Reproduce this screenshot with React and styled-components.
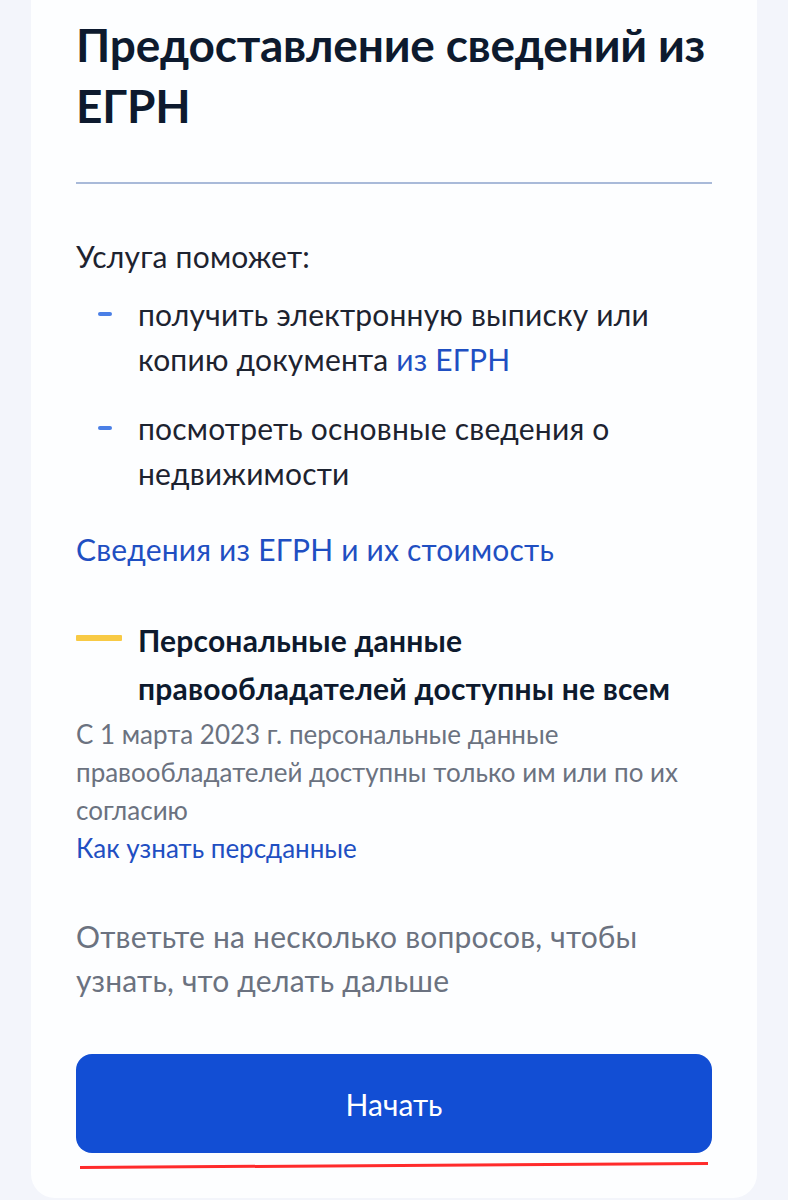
import React from 'react'
import styled, { createGlobalStyle } from 'styled-components'

const GlobalStyle = createGlobalStyle`
html, body {
    margin: 0;
    padding: 0;
    background: #f3f5fb;
    font-family: Lato, "Noto Sans", sans-serif;
    -webkit-font-smoothing: antialiased;
}
`

const App = () => {
    return (
        <Page>
            <GlobalStyle/>
            <Card>
                <Title>Предоставление сведений из ЕГРН</Title>
                <Divider/>
                <Lead>Услуга поможет:</Lead>
                <List>
                    <Item>
                        <Dash/>
                        <ItemText>получить электронную выписку или копию документа <Link>из ЕГРН</Link></ItemText>
                    </Item>
                    <Item>
                        <Dash/>
                        <ItemText>посмотреть основные сведения о недвижимости</ItemText>
                    </Item>
                </List>
                <PriceLink>Сведения из ЕГРН и их стоимость</PriceLink>

                <Notice>
                    <NoticeHead>
                        <NoticeMark/>
                        <NoticeTitle>Персональные данные правообладателей доступны не всем</NoticeTitle>
                    </NoticeHead>
                    <NoticeText>С 1 марта 2023 г. персональные данные правообладателей доступны только им или по их согласию</NoticeText>
                    <NoticeLink>Как узнать персданные</NoticeLink>
                </Notice>

                <Hint>Ответьте на несколько вопросов, чтобы узнать, что делать дальше</Hint>
                <StartButton>Начать</StartButton>
                <Underline/>
            </Card>
        </Page>
    )
}

const Page = styled.div`
width: 788px;
height: 1200px;
overflow: hidden;
background: #f3f5fb;
padding: 0 31px;
box-sizing: border-box;
`
const Card = styled.div`
background: #fdfeff;
border-radius: 0 0 24px 24px;
padding: 14px 45px 0;
height: 1198px;
box-sizing: border-box;
display: flex;
flex-direction: column;
`
const Title = styled.h1`
margin: 0;
font-size: 46px;
line-height: 61px;
font-weight: 700;
color: #0d1a2e;
letter-spacing: -0.2px;
`
const Divider = styled.div`
height: 2px;
background: #a9bad9;
margin: 46px 0 0;
`
const Lead = styled.p`
margin: 50px 0 0;
font-size: 30px;
line-height: 44px;
letter-spacing: 0.2px;
color: #1d2330;
`
const List = styled.ul`
list-style: none;
margin: 14px 0 0;
padding: 0;
display: flex;
flex-direction: column;
gap: 24px;
`
const Item = styled.li`
display: flex;
align-items: flex-start;
`
const Dash = styled.span`
flex: 0 0 auto;
width: 14px;
height: 4px;
background: #4a7fe6;
margin: 20px 26px 0 22px;
border-radius: 2px;
`
const ItemText = styled.span`
font-size: 30px;
line-height: 45px;
letter-spacing: 0.2px;
color: #1d2330;
`
const Link = styled.span`
color: #1f4fc2;
`
const PriceLink = styled.a`
margin: 31px 0 0;
font-size: 30px;
line-height: 44px;
letter-spacing: 0.2px;
color: #1f4fc2;
`
const Notice = styled.div`
margin: 45px 0 0;
display: flex;
flex-direction: column;
`
const NoticeHead = styled.div`
display: flex;
align-items: flex-start;
`
const NoticeMark = styled.span`
flex: 0 0 auto;
width: 46px;
height: 6px;
background: #f8ca45;
margin: 19px 16px 0 0;
border-radius: 1px;
`
const NoticeTitle = styled.h3`
margin: 0;
font-size: 30px;
line-height: 48px;
font-weight: 700;
letter-spacing: 0.2px;
color: #0d1a2e;
`
const NoticeText = styled.p`
margin: 3px 0 0;
font-size: 26px;
line-height: 38px;
color: #6b7280;
`
const NoticeLink = styled.a`
font-size: 26px;
line-height: 38px;
color: #1f4fc2;
`
const Hint = styled.p`
margin: 47px 0 0;
font-size: 30px;
line-height: 44px;
letter-spacing: 0.2px;
color: #6b7280;
`
const StartButton = styled.button`
margin: 52px 0 0;
height: 99px;
width: 100%;
border: none;
border-radius: 16px;
background: #124ed4;
color: #ffffff;
font-family: Lato, "Noto Sans", sans-serif;
font-size: 30px;
cursor: pointer;
`
const Underline = styled.div`
margin: 11px 4px 0;
height: 3px;
background: #ff2b2b;
transform: rotate(-0.36deg);
`

export default App
